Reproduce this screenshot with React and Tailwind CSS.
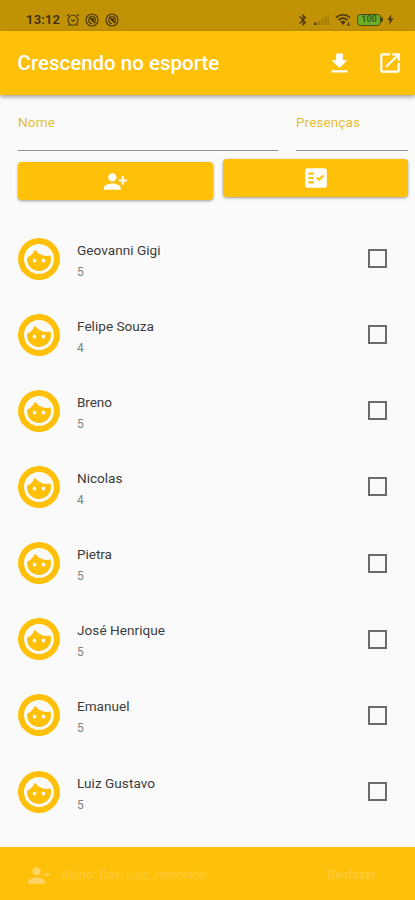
import React from 'react';
import {
  MdFace,
  MdFileDownload,
  MdOpenInNew,
  MdPersonAddAlt1,
  MdPersonRemoveAlt1,
  MdFactCheck,
  MdBluetooth,
} from 'react-icons/md';

const students = [
  { name: 'Geovanni Gigi', count: 5, width: 83.5 },
  { name: 'Felipe Souza', count: 4, width: 77 },
  { name: 'Breno', count: 5, width: 35 },
  { name: 'Nicolas', count: 4, width: 45.5 },
  { name: 'Pietra', count: 5, width: 35 },
  { name: 'José Henrique', count: 5, width: 88 },
  { name: 'Emanuel', count: 5, width: 52.5 },
  { name: 'Luiz Gustavo', count: 5, width: 78 },
];

function AlarmIcon() {
  return (
    <svg width="14" height="14" viewBox="0 0 14 14" fill="none" stroke="currentColor" strokeWidth="1.1">
      <circle cx="7" cy="7.3" r="5" />
      <path d="M1 3 3.4 1.1M13 3 10.6 1.1M4.8 6.6 7 8.3l2.2-1.7M3.4 11.2l-1.2 1.6M10.6 11.2l1.2 1.6" />
    </svg>
  );
}

function SlashedIcon() {
  return (
    <svg width="14" height="14" viewBox="0 0 14 14" fill="none" stroke="currentColor">
      <circle cx="7" cy="7" r="6" strokeWidth="1.2" />
      <path d="M4 5.6c-1 2.8.7 5 3 5M5.5 3.6c2.6-1 5.5.4 5 4.4" strokeWidth="1.2" />
      <path d="m4 3.8 6.3 6.2" strokeWidth="1.8" />
      <path d="M6 5.5h2.600v3z" fill="currentColor" strokeWidth=".8" />
    </svg>
  );
}

function StatusBar() {
  return (
    <div className="flex h-[31px] shrink-0 items-center justify-between bg-[#c19205] pt-2 pr-[21px] pl-[26px] text-[#4b3a0a]">
      <div className="flex items-center gap-[5.5px]">
        <span className="w-[34px] text-[13px] leading-none font-semibold tracking-[0.2px] text-[#3f3008]">13:12</span>
        <AlarmIcon />
        <SlashedIcon />
        <SlashedIcon />
      </div>
      <div className="flex items-center">
        <MdBluetooth size={14} />
        <svg className="ml-[3px]" width="17" height="12" viewBox="0 0 17 12">
          <path d="M1 8.5h2.500V11H1z" fill="currentColor" />
          <path d="M5 7h2v4H5zM8.300 5h2v6h-2zM11.500 3h2v8h-2zM14.500 1h1.500v10h-1.500z" fill="#a37c08" />
        </svg>
        <svg className="ml-[5px]" width="17" height="14" viewBox="0 0 17 14" fill="none" stroke="currentColor" strokeWidth="1.6">
          <path d="M1 4.600c4-3.800 10-3.800 14 0M3.400 7.200c2.800-2.600 6.400-2.600 9.200 0" />
          <path d="M5.300 8.800c1.800-1.400 3.800-1.400 5.400 0L8 12z" fill="currentColor" stroke="none" />
          <path d="M13.500 9v4M12 11.500l1.500 1.500 1.500-1.500" strokeWidth="1" />
        </svg>
        <div className="ml-[5px] flex h-[12px] w-[24px] items-center justify-center rounded-[3.5px] border-[1.5px] border-[#4a4b12] bg-[#6cae25] text-[9px] leading-none font-bold text-[#33631a]">
          100
        </div>
        <div className="h-[5px] w-[2px] rounded-r-sm bg-[#4a4b12]" />
        <svg className="ml-[4px]" width="7" height="11" viewBox="0 0 7 11">
          <path d="M4.500 0 .5 6h2.300L2 11l4.500-6.500H4z" fill="currentColor" />
        </svg>
      </div>
    </div>
  );
}

function Student({ name, count, width }) {
  return (
    <li className="flex h-[76.15px] items-center pr-[28px] pl-[17.5px]">
      <div className="flex size-[42px] shrink-0 items-center justify-center rounded-full bg-[#fec009] text-[#fafafa]">
        <MdFace size={36} />
      </div>
      <div className="ml-[17.5px] flex-1 pt-[5px]">
        <svg className="block overflow-visible" width={width} height="20">
          <text x="0" y="14" fontSize="13.6" fill="#3c3c3c" textLength={width} lengthAdjust="spacing">
            {name}
          </text>
        </svg>
        <p className="pt-[1px] text-[12px] leading-[20px] text-[#808080]">{count}</p>
      </div>
      <div className="size-[19px] border-2 border-[#6b6b6b]" />
    </li>
  );
}

export default function App() {
  return (
    <div className="flex h-[900px] w-[415px] flex-col overflow-hidden bg-[#fafafa] font-['Roboto',sans-serif]">
      <StatusBar />
      <header className="flex h-[64px] shrink-0 items-center bg-[#fec009] pr-[12px] pl-[17.5px] text-white shadow-[0_2px_4px_rgba(0,0,0,0.35)]">
        <h1 className="flex-1 text-[20.5px] font-medium whitespace-nowrap">Crescendo no esporte</h1>
        <MdFileDownload size={27} />
        <MdOpenInNew size={26} className="ml-[24px]" />
      </header>

      <div className="flex h-[56px] shrink-0 gap-[18px] pr-[7px] pl-[18px] text-[13.5px] text-[#e5bd35]">
        <label className="w-[260px] border-b border-[#929292] pt-[17px] tracking-[0.2px]">Nome</label>
        <label className="flex-1 border-b border-[#929292] pt-[17px] tracking-[0.1px]">Presenças</label>
      </div>

      <div className="flex h-[69.5px] shrink-0 gap-[10px] pt-[8px] pr-[7px] pl-[18px] text-white">
        <button className="mt-[3px] flex h-[38px] w-[195px] items-center justify-center rounded-[4px] bg-[#fec009] shadow-[0_1px_3px_rgba(0,0,0,0.4)]">
          <MdPersonAddAlt1 size={25} />
        </button>
        <button className="flex h-[38px] flex-1 items-center justify-center rounded-[4px] bg-[#fec009] shadow-[0_1px_3px_rgba(0,0,0,0.4)]">
          <MdFactCheck size={26} />
        </button>
      </div>

      <ul className="min-h-0 flex-1 overflow-hidden">
        {students.map((student) => (
          <Student key={student.name} {...student} />
        ))}
      </ul>

      <footer className="flex h-[53px] shrink-0 items-center bg-[#fec009] pt-[3px] pr-[39px] pl-[26px] text-[12.5px] text-[#fecb3b]">
        <MdPersonRemoveAlt1 size={25} className="text-[#fed466]" />
        <span className="ml-[10px] flex-1 whitespace-nowrap">Aluno: Davi Luiz, removido</span>
        <span className="text-[12.2px] font-medium">Desfazer</span>
      </footer>
    </div>
  );
}
